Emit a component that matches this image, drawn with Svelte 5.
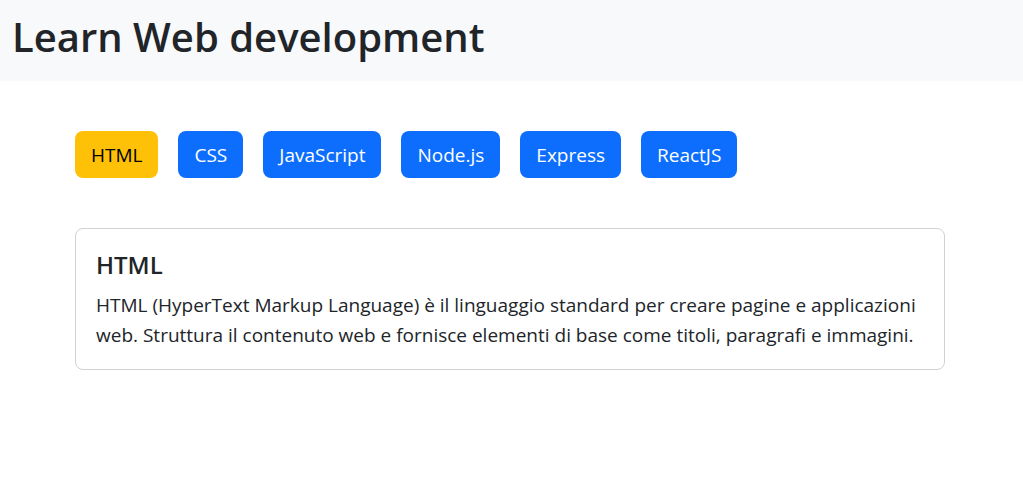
<script>
  const topics = [
    {
      title: 'HTML',
      text: 'HTML (HyperText Markup Language) è il linguaggio standard per creare pagine e applicazioni web. Struttura il contenuto web e fornisce elementi di base come titoli, paragrafi e immagini.',
    },
    { title: 'CSS', text: 'CSS descrive la presentazione delle pagine web.' },
    { title: 'JavaScript', text: 'JavaScript aggiunge interattività alle pagine web.' },
    { title: 'Node.js', text: 'Node.js esegue JavaScript lato server.' },
    { title: 'Express', text: 'Express è un framework web per Node.js.' },
    { title: 'ReactJS', text: 'ReactJS è una libreria per creare interfacce utente.' },
  ];

  let selected = $state(0);
  const topic = $derived(topics[selected]);
</script>

<header>
  <h1>Learn Web development</h1>
</header>

<main>
  <div class="tabs">
    {#each topics as item, i}
      <button type="button" class:active={i === selected} onclick={() => (selected = i)}>
        {item.title}
      </button>
    {/each}
  </div>

  <article class="card">
    <h2>{topic.title}</h2>
    <p>{topic.text}</p>
  </article>
</main>

<style>
  :global(body) {
    background: #fff;
    color: #212529;
    font-family: 'Segoe UI', 'Open Sans', 'Noto Sans', sans-serif;
    font-size: 19px;
    line-height: 30px;
  }

  header {
    padding: 10px 12px;
    background: #f8f9fa;
  }

  h1 {
    margin: 0 0 8px;
    font-size: 40px;
    font-weight: 600;
    line-height: 53px;
  }

  main {
    max-width: 870px;
    margin: 50px 78px 0 75px;
  }

  .tabs {
    display: flex;
    flex-wrap: wrap;
    gap: 20px;
    margin-bottom: 50px;
  }

  button {
    padding: 9px 16px 8px;
    border: 0;
    border-radius: 8px;
    background: #0d6efd;
    color: #fff;
    font: inherit;
    cursor: pointer;
  }

  button.active {
    background: #ffc107;
    color: #000;
  }

  .card {
    padding: 21px 20px 19px;
    border: 1px solid #d0d1d2;
    border-radius: 8px;
  }

  h2 {
    margin: 0 0 10px;
    font-size: 24px;
    font-weight: 600;
    line-height: 30px;
  }

  p {
    margin: 0;
  }
</style>
